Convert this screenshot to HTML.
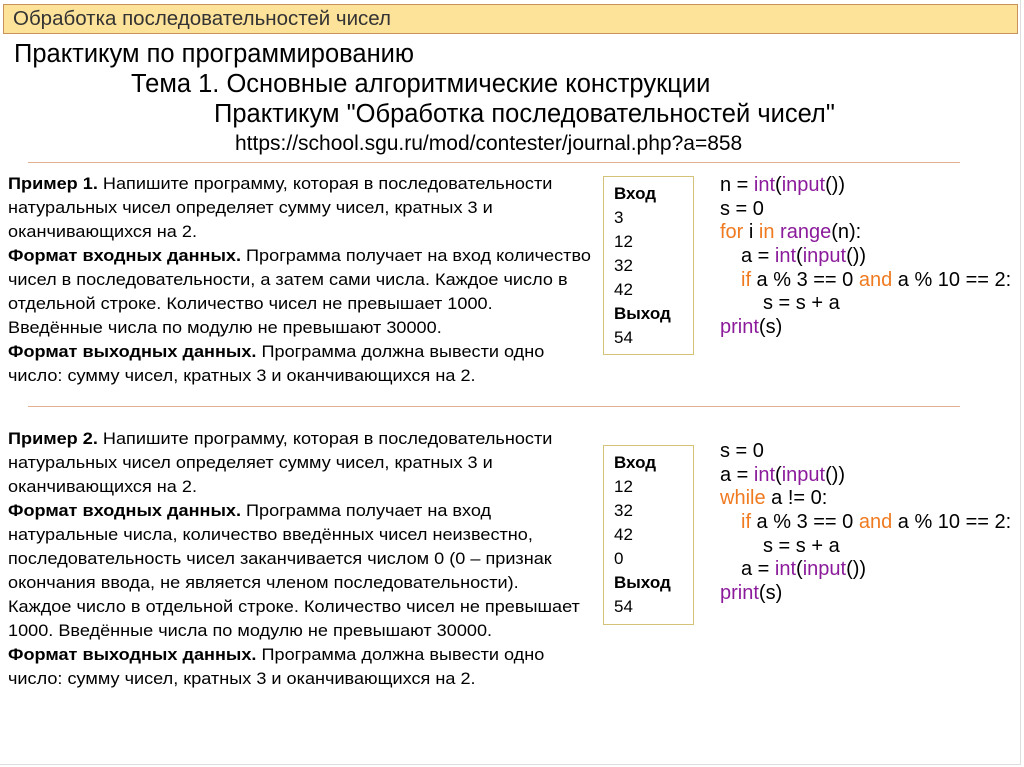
<!DOCTYPE html>
<html><head><meta charset="utf-8"><style>
body{margin:0;width:1024px;height:767px;background:#fff;position:relative;overflow:hidden;font-family:"Liberation Sans",sans-serif;color:#000}
.frame{position:absolute;left:0;top:0;width:1020px;height:764px;border-right:1px solid #ddd;border-bottom:1px solid #ddd}
.hdr{position:absolute;left:3px;top:4px;width:1013px;height:28px;background:#fde39a;border:1px solid #c8935a}
.hdr span{position:absolute;left:9px;top:2px;font-size:20.5px;color:#333}
.t{position:absolute;white-space:nowrap}
.hr{position:absolute;height:1px;background:#e0b090}
.txt{position:absolute;left:8px;font-size:17px;line-height:24px;white-space:nowrap;transform:scaleX(1.065);transform-origin:left top}
.box{position:absolute;border:1px solid #d4c27a;left:603px;width:91px;font-size:17px;line-height:24px;box-sizing:border-box;padding-left:10px}
.code{position:absolute;left:720px;font-size:20px;line-height:23.7px;white-space:nowrap;font-family:"Liberation Sans",sans-serif;color:#000}
.code div{height:23.7px}
.i1{padding-left:21px}.i2{padding-left:43px}
.k{color:#f07a20}.f{color:#8b1b9b}
</style></head><body>
<div class="frame"></div>
<div class="hdr"><span>Обработка последовательностей чисел</span></div>
<div class="t" style="left:14px;top:40px;font-size:25.5px">Практикум по программированию</div>
<div class="t" style="left:131px;top:70px;font-size:25.5px">Тема 1. Основные алгоритмические конструкции</div>
<div class="t" style="left:214px;top:100px;font-size:25.5px">Практикум "Обработка последовательностей чисел"</div>
<div class="t" style="left:235px;top:132px;font-size:21px">https://school.sgu.ru/mod/contester/journal.php?a=858</div>
<div class="hr" style="left:28px;top:162px;width:932px"></div>
<div class="txt" style="top:172px"><b>Пример 1.</b> Напишите программу, которая в последовательности<br>натуральных чисел определяет сумму чисел, кратных 3 и<br>оканчивающихся на 2.<br><b>Формат входных данных.</b> Программа получает на вход количество<br>чисел в последовательности, а затем сами числа. Каждое число в<br>отдельной строке. Количество чисел не превышает 1000.<br>Введённые числа по модулю не превышают 30000.<br><b>Формат выходных данных.</b> Программа должна вывести одно<br>число: сумму чисел, кратных 3 и оканчивающихся на 2.</div>
<div class="box" style="top:176px;height:179px;padding-top:5px"><b>Вход</b><br>3<br>12<br>32<br>42<br><b>Выход</b><br>54</div>
<div class="code" style="top:174px">
<div>n = <span class="f">int</span>(<span class="f">input</span>())</div>
<div>s = 0</div>
<div><span class="k">for</span> i <span class="k">in</span> <span class="f">range</span>(n):</div>
<div class="i1">a = <span class="f">int</span>(<span class="f">input</span>())</div>
<div class="i1"><span class="k">if</span> a % 3 == 0 <span class="k">and</span> a % 10 == 2:</div>
<div class="i2">s = s + a</div>
<div><span class="f">print</span>(s)</div>
</div>
<div class="hr" style="left:28px;top:406px;width:932px"></div>
<div class="txt" style="top:427px"><b>Пример 2.</b> Напишите программу, которая в последовательности<br>натуральных чисел определяет сумму чисел, кратных 3 и<br>оканчивающихся на 2.<br><b>Формат входных данных.</b> Программа получает на вход<br>натуральные числа, количество введённых чисел неизвестно,<br>последовательность чисел заканчивается числом 0 (0 – признак<br>окончания ввода, не является членом последовательности).<br>Каждое число в отдельной строке. Количество чисел не превышает<br>1000. Введённые числа по модулю не превышают 30000.<br><b>Формат выходных данных.</b> Программа должна вывести одно<br>число: сумму чисел, кратных 3 и оканчивающихся на 2.</div>
<div class="box" style="top:445px;height:180px;padding-top:5px"><b>Вход</b><br>12<br>32<br>42<br>0<br><b>Выход</b><br>54</div>
<div class="code" style="top:440px">
<div>s = 0</div>
<div>a = <span class="f">int</span>(<span class="f">input</span>())</div>
<div><span class="k">while</span> a != 0:</div>
<div class="i1"><span class="k">if</span> a % 3 == 0 <span class="k">and</span> a % 10 == 2:</div>
<div class="i2">s = s + a</div>
<div class="i1">a = <span class="f">int</span>(<span class="f">input</span>())</div>
<div><span class="f">print</span>(s)</div>
</div>
</body></html>
